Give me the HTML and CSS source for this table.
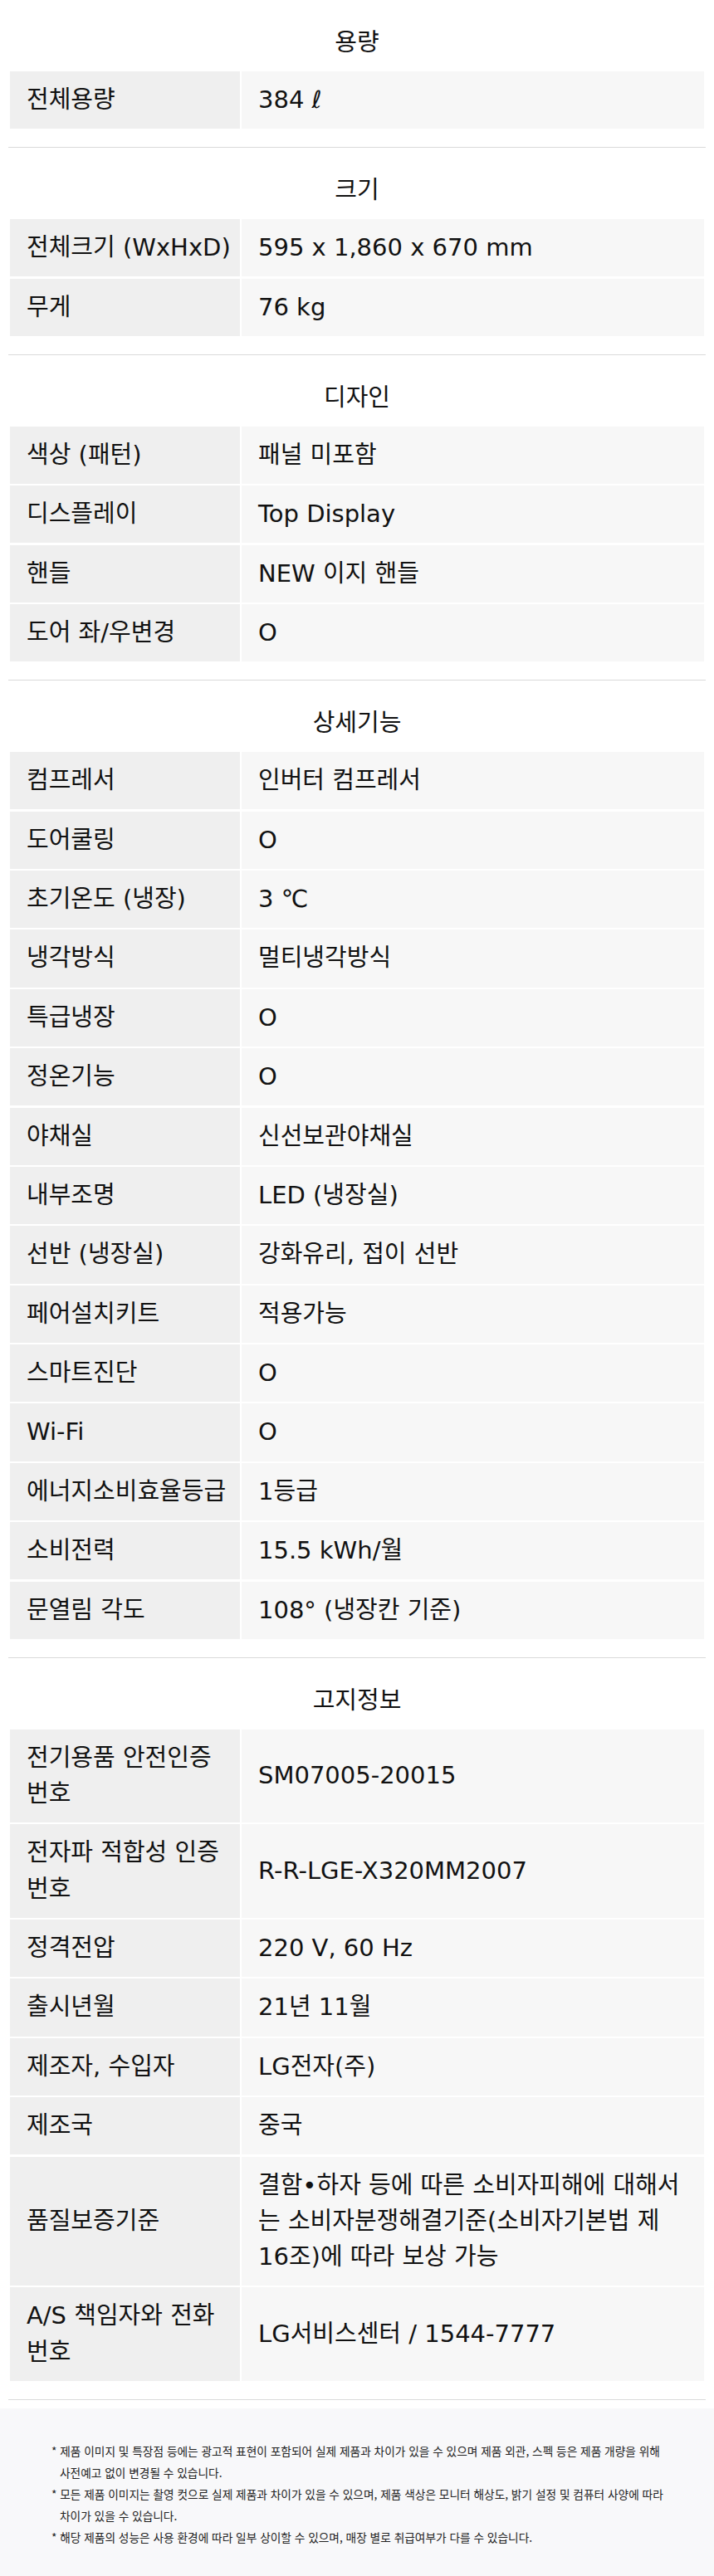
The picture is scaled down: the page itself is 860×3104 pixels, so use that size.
FILE: index.html
```html
<!DOCTYPE html>
<html lang="ko">
<head>
<meta charset="utf-8">
<title>제품 사양</title>
<link rel="stylesheet" href="styles.css">
</head>
<body>
<main class="spec">
  <section class="spec-section">
    <h2 class="spec-title">용량</h2>
    <dl class="spec-list">
      <dt>전체용량</dt><dd>384 ℓ</dd>
    </dl>
  </section>

  <section class="spec-section">
    <h2 class="spec-title">크기</h2>
    <dl class="spec-list">
      <dt>전체크기 (WxHxD)</dt><dd>595 x 1,860 x 670 mm</dd>
      <dt>무게</dt><dd>76 kg</dd>
    </dl>
  </section>

  <section class="spec-section">
    <h2 class="spec-title">디자인</h2>
    <dl class="spec-list">
      <dt>색상 (패턴)</dt><dd>패널 미포함</dd>
      <dt>디스플레이</dt><dd>Top Display</dd>
      <dt>핸들</dt><dd>NEW 이지 핸들</dd>
      <dt>도어 좌/우변경</dt><dd>O</dd>
    </dl>
  </section>

  <section class="spec-section">
    <h2 class="spec-title">상세기능</h2>
    <dl class="spec-list">
      <dt>컴프레서</dt><dd>인버터 컴프레서</dd>
      <dt>도어쿨링</dt><dd>O</dd>
      <dt>초기온도 (냉장)</dt><dd>3 ℃</dd>
      <dt>냉각방식</dt><dd>멀티냉각방식</dd>
      <dt>특급냉장</dt><dd>O</dd>
      <dt>정온기능</dt><dd>O</dd>
      <dt>야채실</dt><dd>신선보관야채실</dd>
      <dt>내부조명</dt><dd>LED (냉장실)</dd>
      <dt>선반 (냉장실)</dt><dd>강화유리, 접이 선반</dd>
      <dt>페어설치키트</dt><dd>적용가능</dd>
      <dt>스마트진단</dt><dd>O</dd>
      <dt>Wi-Fi</dt><dd>O</dd>
      <dt>에너지소비효율등급</dt><dd>1등급</dd>
      <dt>소비전력</dt><dd>15.5 kWh/월</dd>
      <dt>문열림 각도</dt><dd>108° (냉장칸 기준)</dd>
    </dl>
  </section>

  <section class="spec-section">
    <h2 class="spec-title">고지정보</h2>
    <dl class="spec-list">
      <dt>전기용품 안전인증 번호</dt><dd>SM07005-20015</dd>
      <dt>전자파 적합성 인증 번호</dt><dd>R-R-LGE-X320MM2007</dd>
      <dt>정격전압</dt><dd>220 V, 60 Hz</dd>
      <dt>출시년월</dt><dd>21년 11월</dd>
      <dt>제조자, 수입자</dt><dd>LG전자(주)</dd>
      <dt>제조국</dt><dd>중국</dd>
      <dt>품질보증기준</dt><dd><span class="wrap-text">결함•하자 등에 따른 소비자피해에 대해서는 소비자분쟁해결기준(소비자기본법 제<span class="nobr">16조)</span>에 따라 보상 가능</span></dd>
      <dt>A/S 책임자와 전화 번호</dt><dd>LG서비스센터 / 1544-7777</dd>
    </dl>
  </section>
</main>

<footer class="notice">
  <ul class="notice-list">
    <li>* 제품 이미지 및 특장점 등에는 광고적 표현이 포함되어 실제 제품과 차이가 있을 수 있으며 제품 외관, 스펙 등은 제품 개량을 위해 사전예고 없이 변경될 수 있습니다.</li>
    <li>* 모든 제품 이미지는 촬영 컷으로 실제 제품과 차이가 있을 수 있으며, 제품 색상은 모니터 해상도, 밝기 설정 및 컴퓨터 사양에 따라 차이가 있을 수 있습니다.</li>
    <li>* 해당 제품의 성능은 사용 환경에 따라 일부 상이할 수 있으며, 매장 별로 취급여부가 다를 수 있습니다.</li>
  </ul>
</footer>
</body>
</html>
```

FILE: styles.css
```css
* {
  box-sizing: border-box;
}

html, body {
  margin: 0;
  padding: 0;
  background: #ffffff;
}

body {
  font-family: "DejaVu Sans", "Noto Sans CJK KR", sans-serif;
  color: #111111;
}

.spec {
  display: flex;
  flex-direction: column;
}

.spec-section {
  margin: 0 10px;
  padding-bottom: 22px;
  border-bottom: 1px solid #dadada;
}

.spec-title {
  margin: 0;
  padding: 27px 0 16px;
  font-family: "Noto Sans CJK KR", sans-serif;
  font-size: 29px;
  font-weight: 400;
  line-height: 43px;
  text-align: center;
  color: #111111;
}

.spec-list {
  display: grid;
  grid-template-columns: 277px 1fr;
  gap: 2.2px 2px;
  margin: 0 2px;
}

.spec-list dt,
.spec-list dd {
  display: flex;
  align-items: center;
  margin: 0;
  padding: 13px 8px 13px 20px;
  font-size: 29px;
  line-height: 43.2px;
  color: #111111;
}

.spec-list dt {
  background: #efefef;
}

.spec-list dd {
  background: #f7f7f7;
  padding-right: 20px;
}

.wrap-text {
  display: block;
}

.nobr {
  white-space: nowrap;
}

.notice {
  margin-top: 10px;
  background: #f8f8fa;
  padding: 38px 43px 34px 62px;
}

.notice-list {
  list-style: none;
  margin: 0;
  padding: 0;
}

.notice-list li {
  padding-left: 10px;
  text-indent: -10px;
  font-family: "Noto Sans CJK KR", sans-serif;
  font-size: 13.7px;
  line-height: 26px;
  color: #222222;
  word-break: keep-all;
}
```
